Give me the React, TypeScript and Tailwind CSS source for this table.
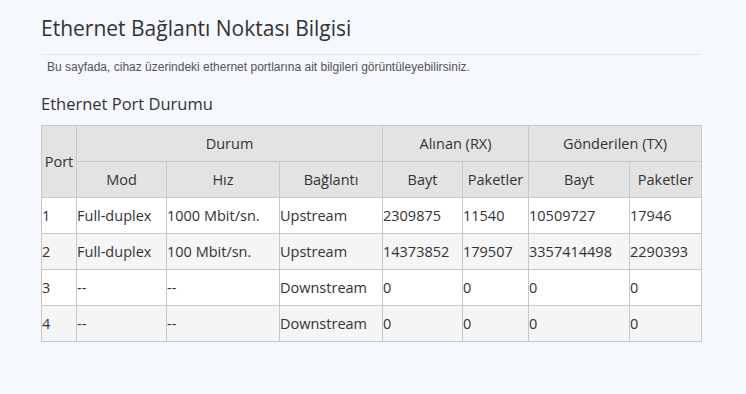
const ports = [
  { port: "1", mod: "Full-duplex", hiz: "1000 Mbit/sn.", baglanti: "Upstream", rxB: "2309875", rxP: "11540", txB: "10509727", txP: "17946" },
  { port: "2", mod: "Full-duplex", hiz: "100 Mbit/sn.", baglanti: "Upstream", rxB: "14373852", rxP: "179507", txB: "3357414498", txP: "2290393" },
  { port: "3", mod: "--", hiz: "--", baglanti: "Downstream", rxB: "0", rxP: "0", txB: "0", txP: "0" },
  { port: "4", mod: "--", hiz: "--", baglanti: "Downstream", rxB: "0", rxP: "0", txB: "0", txP: "0" },
];

const font = "font-['Segoe_UI','Open_Sans',sans-serif]";

export default function App() {
  return (
    <div className="min-h-[394px] w-full bg-[#f5f8fc] pl-[41px] pt-[14px]">
      <div className={`w-[660px] ${font} text-[#333]`}>
        <h1 className="text-[21px] leading-[28px] font-normal pb-[12px] border-b border-[#e2e4e6]">
          Ethernet Bağlantı Noktası Bilgisi
        </h1>
        <p className="mt-[4px] pl-[6px] font-['Liberation_Sans',Arial,sans-serif] text-[12px] leading-[16px] text-[#555]">
          Bu sayfada, cihaz üzerindeki ethernet portlarına ait bilgileri görüntüleyebilirsiniz.
        </p>
        <h2 className="mt-[17px] text-[16.5px] leading-[24px] font-normal">Ethernet Port Durumu</h2>
        <table className="mt-[9px] w-[660px] table-fixed border-collapse text-[14.5px] text-[#333]">
          <colgroup>
            <col className="w-[35px]" />
            <col className="w-[90px]" />
            <col className="w-[113px]" />
            <col className="w-[103px]" />
            <col className="w-[80px]" />
            <col className="w-[66px]" />
            <col className="w-[101px]" />
            <col className="w-[72px]" />
          </colgroup>
          <thead className="bg-[#e3e3e3]">
            <tr className="h-[36px]">
              <th rowSpan={2} className="border border-[#c8c8c8] font-normal text-center">Port</th>
              <th colSpan={3} className="border border-[#c8c8c8] font-normal text-center">Durum</th>
              <th colSpan={2} className="border border-[#c8c8c8] font-normal text-center">Alınan (RX)</th>
              <th colSpan={2} className="border border-[#c8c8c8] font-normal text-center">Gönderilen (TX)</th>
            </tr>
            <tr className="h-[36px]">
              <th className="border border-[#c8c8c8] font-normal text-center">Mod</th>
              <th className="border border-[#c8c8c8] font-normal text-center">Hız</th>
              <th className="border border-[#c8c8c8] font-normal text-center">Bağlantı</th>
              <th className="border border-[#c8c8c8] font-normal text-center">Bayt</th>
              <th className="border border-[#c8c8c8] font-normal text-center">Paketler</th>
              <th className="border border-[#c8c8c8] font-normal text-center">Bayt</th>
              <th className="border border-[#c8c8c8] font-normal text-center">Paketler</th>
            </tr>
          </thead>
          <tbody>
            {ports.map((p, i) => (
              <tr key={p.port} className={`h-[36px] ${i % 2 === 0 ? "bg-white" : "bg-[#f5f5f5]"}`}>
                {[p.port, p.mod, p.hiz, p.baglanti, p.rxB, p.rxP, p.txB, p.txP].map((v, j) => (
                  <td key={j} className="border border-[#c8c8c8] px-0 text-left whitespace-nowrap">
                    {v}
                  </td>
                ))}
              </tr>
            ))}
          </tbody>
        </table>
      </div>
    </div>
  );
}
